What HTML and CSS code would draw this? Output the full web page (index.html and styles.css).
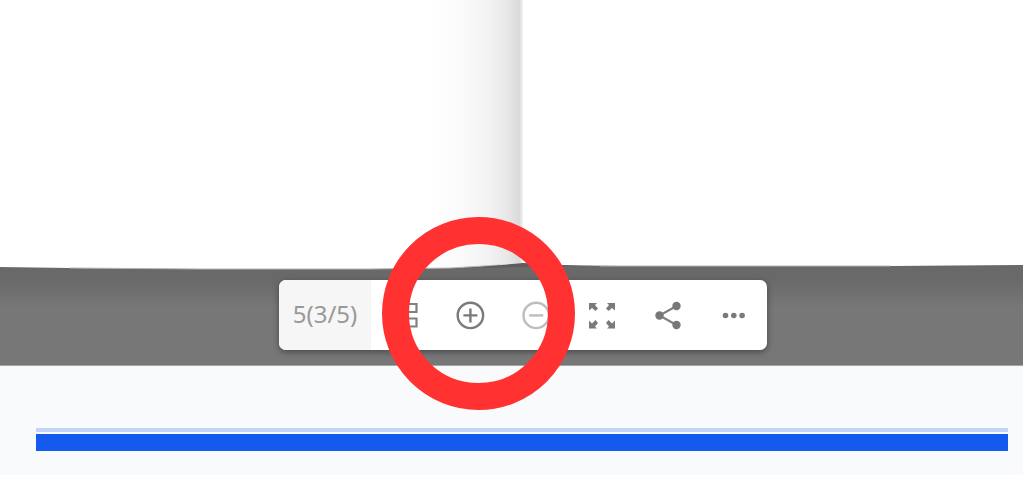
FILE: index.html
```html
<!DOCTYPE html>
<html lang="en">
<head>
<meta charset="utf-8">
<title>Flipbook viewer</title>
<link rel="stylesheet" href="styles.css">
</head>
<body>
<main class="frame">
  <section class="viewer" aria-label="Flipbook">
    <svg class="book" viewBox="0 0 1023 270" preserveAspectRatio="none" aria-hidden="true">
      <defs>
        <linearGradient id="fold" gradientUnits="userSpaceOnUse" x1="430" y1="0" x2="523" y2="0">
          <stop offset="0" stop-color="#ffffff"/>
          <stop offset="0.35" stop-color="#fafafa"/>
          <stop offset="0.65" stop-color="#f2f2f2"/>
          <stop offset="0.85" stop-color="#e6e6e7"/>
          <stop offset="0.96" stop-color="#d9d9d9"/>
          <stop offset="1" stop-color="#f4f4f4"/>
        </linearGradient>
      </defs>
      <path fill="#fff" d="M0 0H1023V265L890 266H620L560 265L523 263L500 265L450 268L370 269H200L70 268L0 267Z"/>
      <path fill="url(#fold)" d="M430 0H523V263L500 265L450 268L430 268Z"/>
      <path fill="none" stroke="#b4b4b4" d="M70 268L200 269H370L450 268L500 265M600 266H890"/>
      <path fill="#555" opacity="0.6" d="M470 268L500 265L523 263L545 264L580 266Z"/>
    </svg>
    <div class="dock">
      <div class="toolbar" role="toolbar" aria-label="Viewer controls">
        <span class="page-label">5(3/5)</span>
        <button class="tool" type="button" aria-label="Thumbnails">
          <svg class="icon" viewBox="0 0 32 32"><path fill="none" stroke="#808080" stroke-width="2.2" d="M4.500 5H13.500V13H4.500ZM19.500 5H28.500V13H19.500ZM4.500 19.500H13.500V27.500H4.500ZM19.500 19.500H28.500V27.500H19.500Z"/></svg>
        </button>
        <button class="tool" type="button" aria-label="Zoom in">
          <svg class="icon" viewBox="0 0 32 32"><g fill="none" stroke="#7a7a7a" stroke-width="2.400"><circle cx="16.400" cy="16.400" r="12.700"/><path d="M9.400 16.400H23.400M16.400 9.400V23.400"/></g></svg>
        </button>
        <button class="tool" type="button" aria-label="Zoom out" disabled>
          <svg class="icon" viewBox="0 0 32 32"><g fill="none" stroke="#bdbdbd" stroke-width="2.400"><circle cx="16.200" cy="16.400" r="12.700"/><path d="M9.200 16.400H23.200"/></g></svg>
        </button>
        <button class="tool" type="button" aria-label="Full screen">
          <svg class="icon" viewBox="0 0 32 32"><g fill="#7a7a7a"><path d="M3 4H11L9 6L12 9.500L9.500 12L6 9L3 11.500Z"/><path d="M29 4H21L23 6L20 9.500L22.500 12L26 9L29 11.500Z"/><path d="M3 29.500H11L9 27.500L12 24L9.500 21L6 24.500L3 21.500Z"/><path d="M29 29.500H21L23 27.500L20 24L22.500 21L26 24.500L29 21.500Z"/></g></svg>
        </button>
        <button class="tool" type="button" aria-label="Share">
          <svg class="icon" viewBox="0 0 32 32"><path fill="none" stroke="#808080" stroke-width="2.200" d="M24.500 7L7.500 16.500L24.500 26"/><g fill="#777"><circle cx="24.500" cy="7" r="4.200"/><circle cx="7.500" cy="16.500" r="4.200"/><circle cx="24.500" cy="26" r="4.200"/></g></svg>
        </button>
        <button class="tool" type="button" aria-label="More">
          <svg class="icon" viewBox="0 0 32 32"><g fill="#7a7a7a"><circle cx="7.500" cy="16.500" r="2.800"/><circle cx="15.800" cy="16.500" r="2.800"/><circle cx="24.100" cy="16.500" r="2.800"/></g></svg>
        </button>
        <span class="highlight" aria-hidden="true"></span>
      </div>
    </div>
  </section>
  <div class="footer">
    <div class="rule-light"></div>
    <div class="rule"></div>
  </div>
</main>
</body>
</html>
```
FILE: styles.css
```css
* {
  box-sizing: border-box;
}

body {
  margin: 0;
  background: #fff;
  font-family: "Noto Sans", "Open Sans", sans-serif;
}

.frame {
  margin-right: 1px;
  background: #f9fafc;
}

.viewer {
  background: linear-gradient(#696969 280px, #777 308px);
  border-bottom: 1px solid #a5a5a5;
}

.book {
  display: block;
  width: 100%;
  height: 270px;
}

.dock {
  display: flex;
  justify-content: center;
  padding: 10px 0 15px 23px;
}

.toolbar {
  position: relative;
  display: flex;
  height: 70px;
  background: #fff;
  border-radius: 7px;
  box-shadow: 0 2px 6px rgba(0, 0, 0, 0.4);
}

.page-label {
  display: flex;
  align-items: center;
  justify-content: center;
  width: 92px;
  padding-bottom: 2px;
  background: #f6f6f6;
  border-radius: 7px 0 0 7px;
  color: #999;
  font-size: 24px;
  line-height: 32px;
}

.tool {
  display: flex;
  align-items: center;
  justify-content: center;
  width: 66px;
  padding: 0;
  border: 0;
  background: none;
}

.icon {
  width: 32px;
  height: 32px;
}

.highlight {
  position: absolute;
  top: -63px;
  left: 103px;
  width: 193px;
  height: 193px;
  border: 27px solid #ff3131;
  border-radius: 50%;
  pointer-events: none;
}

.footer {
  padding: 62px 15px 24px 36px;
}

.rule-light {
  height: 4px;
  margin-bottom: 2px;
  background: #c2d2f8;
}

.rule {
  height: 17px;
  background: #155aef;
}
```
